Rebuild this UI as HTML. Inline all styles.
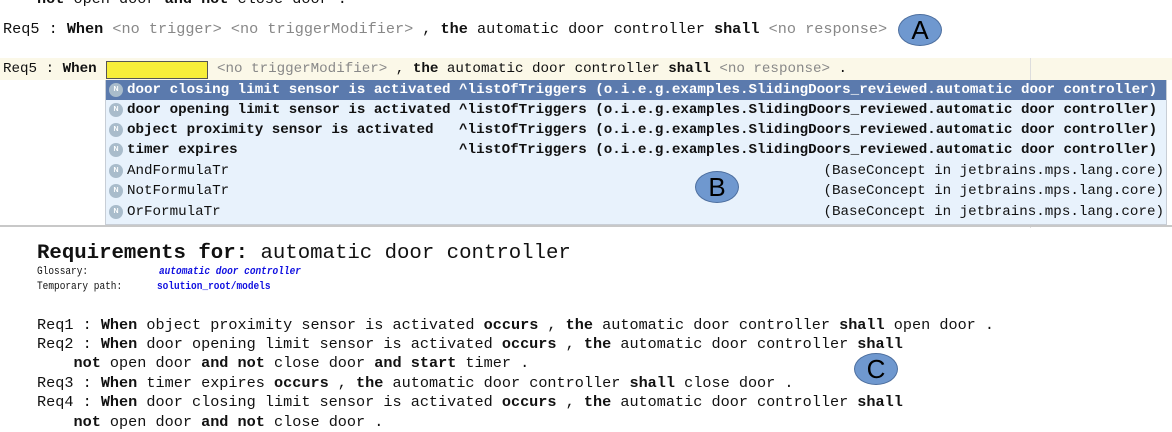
<!DOCTYPE html>
<html><head><meta charset="utf-8"><style>
body{margin:0;width:1172px;height:430px;background:#fff;position:relative;overflow:hidden;font-family:"Liberation Mono",monospace;color:#111}
.l{position:absolute;white-space:pre;line-height:20px}
b{font-weight:bold}
.g{color:#888}
.m{font-size:15.2px}
.p{font-size:14.2px}
.row{position:absolute;left:106px;width:1060px;height:20px;line-height:20px;white-space:pre;font-size:14.2px}
.row .i{position:absolute;left:3px;top:3px;width:14px;height:14px;border-radius:50%;background:#a9bccb;color:#fff;font:bold 7px "Liberation Sans",sans-serif;text-align:center;line-height:14px}
.row .t{position:absolute;left:21px}
.row .r{position:absolute;right:2px}
.c{position:absolute;width:44px;height:32px;border-radius:50%;background:#6f98cf;border:1.5px solid #4c6e9e;box-sizing:border-box;text-align:center;font:26px/30px "Liberation Sans",sans-serif;color:#000}
.s{position:absolute;white-space:pre;font-size:11px;line-height:15px;transform:scaleX(0.86);transform-origin:0 0}
</style></head><body>
<div class="l m" style="left:37px;top:-11px"><b>not</b> open door <b>and not</b> close door .</div>
<div class="l m" style="left:3px;top:19px">Req5 : <b>When</b> <span class="g">&lt;no trigger&gt;</span> <span class="g">&lt;no triggerModifier&gt;</span> , <b>the</b> automatic door controller <b>shall</b> <span class="g">&lt;no response&gt;</span></div>
<div class="c" style="left:898px;top:14px">A</div>

<div style="position:absolute;left:0;top:58px;width:1172px;height:22px;background:#fbf8e8"></div>
<div style="position:absolute;left:1030px;top:58px;width:1px;height:170px;background:#ddd"></div>
<div class="l p" style="left:3px;top:59px">Req5 : <b>When</b></div>
<div style="position:absolute;left:106px;top:61px;width:102px;height:18px;background:#f7ee3a;border:1px solid #555;box-sizing:border-box"></div>
<div class="l p" style="left:217px;top:59px"><span class="g">&lt;no triggerModifier&gt;</span> , <b>the</b> automatic door controller <b>shall</b> <span class="g">&lt;no response&gt;</span> .</div>

<div style="position:absolute;left:105px;top:80px;width:1062px;height:145px;background:#e8f2fc;border:1px solid #c8ced6;box-sizing:border-box"></div>
<div style="position:absolute;left:0;top:225px;width:1172px;height:2px;background:#c8c8c8"></div>
<div class="row" style="top:80px;background:#5b7aad;color:#fff;font-weight:bold"><span class="i">N</span><span class="t">door closing limit sensor is activated ^listOfTriggers (o.i.e.g.examples.SlidingDoors_reviewed.automatic door controller)</span></div>
<div class="row" style="top:100px;font-weight:bold"><span class="i">N</span><span class="t">door opening limit sensor is activated ^listOfTriggers (o.i.e.g.examples.SlidingDoors_reviewed.automatic door controller)</span></div>
<div class="row" style="top:120px;font-weight:bold"><span class="i">N</span><span class="t">object proximity sensor is activated   ^listOfTriggers (o.i.e.g.examples.SlidingDoors_reviewed.automatic door controller)</span></div>
<div class="row" style="top:140px;font-weight:bold"><span class="i">N</span><span class="t">timer expires                          ^listOfTriggers (o.i.e.g.examples.SlidingDoors_reviewed.automatic door controller)</span></div>
<div class="row" style="top:161px"><span class="i">N</span><span class="t">AndFormulaTr</span><span class="r">(BaseConcept in jetbrains.mps.lang.core)</span></div>
<div class="row" style="top:181px"><span class="i">N</span><span class="t">NotFormulaTr</span><span class="r">(BaseConcept in jetbrains.mps.lang.core)</span></div>
<div class="row" style="top:202px"><span class="i">N</span><span class="t">OrFormulaTr</span><span class="r">(BaseConcept in jetbrains.mps.lang.core)</span></div>
<div class="c" style="left:695px;top:171px">B</div>

<div class="l" style="left:37px;top:242px;font-size:20.7px;line-height:24px"><b>Requirements for:</b> automatic door controller</div>
<div class="s" style="left:37px;top:265px">Glossary:</div>
<div class="s" style="left:159px;top:265px;color:#1010e0;font-style:italic;font-weight:bold">automatic door controller</div>
<div class="s" style="left:37px;top:280px">Temporary path:</div>
<div class="s" style="left:157px;top:280px;color:#1010e0;font-weight:bold">solution_root/models</div>

<div class="l m" style="left:37px;top:315px">Req1 : <b>When</b> object proximity sensor is activated <b>occurs</b> , <b>the</b> automatic door controller <b>shall</b> open door .</div>
<div class="l m" style="left:37px;top:334px">Req2 : <b>When</b> door opening limit sensor is activated <b>occurs</b> , <b>the</b> automatic door controller <b>shall</b></div>
<div class="l m" style="left:37px;top:353px">    <b>not</b> open door <b>and not</b> close door <b>and</b> <b>start</b> timer .</div>
<div class="l m" style="left:37px;top:373px">Req3 : <b>When</b> timer expires <b>occurs</b> , <b>the</b> automatic door controller <b>shall</b> close door .</div>
<div class="l m" style="left:37px;top:392px">Req4 : <b>When</b> door closing limit sensor is activated <b>occurs</b> , <b>the</b> automatic door controller <b>shall</b></div>
<div class="l m" style="left:37px;top:412px">    <b>not</b> open door <b>and not</b> close door .</div>
<div class="c" style="left:854px;top:353px">C</div>
</body></html>
